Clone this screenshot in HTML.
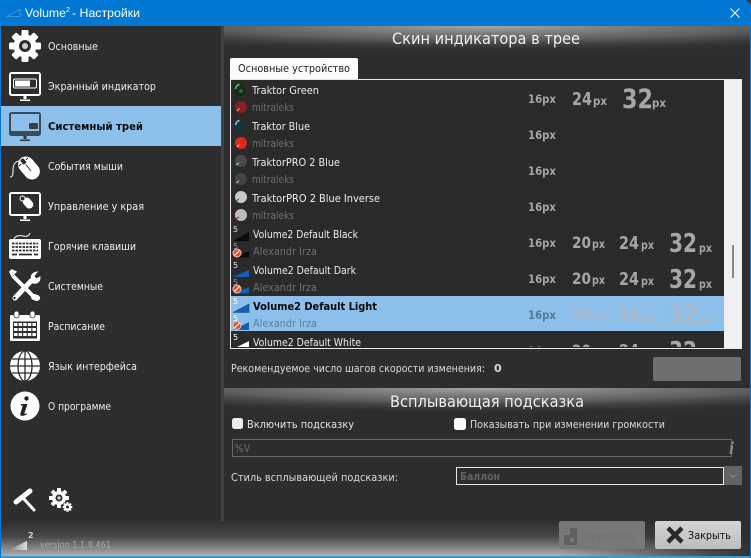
<!DOCTYPE html>
<html lang="ru"><head><meta charset="utf-8"><title>Volume2 - Настройки</title>
<style>
html,body{margin:0;padding:0;background:#2d2d2d;width:751px;height:558px;overflow:hidden}
svg{display:block;position:absolute;left:0;top:0;filter:blur(.3px)}
text{font-family:"DejaVu Sans",sans-serif;font-size:11px;fill:#e4e4e4}
.t{font-family:"Liberation Sans",sans-serif;font-size:12px;fill:#fff}
.m{font-size:11px;fill:#ececec}
.n{font-size:11px;fill:#ececec}
.g{font-size:11px;fill:#6f6f6f}
.s{font-family:"DejaVu Sans",sans-serif;font-weight:bold;fill:#a6a6a6}
.h{font-size:16px;fill:#f0f0f0}
.e{fill:#d4d4d4;filter:drop-shadow(.6px 0 0 rgba(255,255,255,.18))}
.f{fill:#a9b9c7}
.v{font-size:8px;fill:#e0e0e0}
</style></head><body>
<svg width="751" height="558" viewBox="0 0 751 558" xmlns="http://www.w3.org/2000/svg">
<defs>
<radialGradient id="g1" cx="0.5" cy="0" r="1"><stop offset="0" stop-color="#a8a8a8"/><stop offset=".5" stop-color="#7a7a7a" stop-opacity=".65"/><stop offset="1" stop-color="#2d2d2d" stop-opacity="0"/></radialGradient>
<linearGradient id="g2" x1="0" y1="0" x2="0" y2="1"><stop offset="0" stop-color="#aaa" stop-opacity="0"/><stop offset=".45" stop-color="#aaa" stop-opacity=".2"/><stop offset="1" stop-color="#b0b0b0"/></linearGradient>
<linearGradient id="g3" x1="0" y1="0" x2="1" y2="0"><stop offset="0" stop-color="#2d2d2d" stop-opacity="0"/><stop offset="1" stop-color="#2d2d2d" stop-opacity=".95"/></linearGradient>
<linearGradient id="btn" x1="0" y1="0" x2="0" y2="1"><stop offset="0" stop-color="#d4d4d4"/><stop offset="1" stop-color="#bdbdbd"/></linearGradient>
<linearGradient id="tri" x1="0" y1="0" x2="1" y2="0"><stop offset="0" stop-color="#888"/><stop offset="1" stop-color="#ddd"/></linearGradient>
<clipPath id="lc"><rect x="231" y="80" width="493" height="267"/></clipPath>
<g id="ban"><circle cx="0" cy="0" r="4" fill="#d9502f" stroke="#f2c4b4" stroke-width="1"/><path d="M-2.500 2.500L2.500-2.500" stroke="#fff" stroke-width="1.200"/></g>
</defs>

<!-- window -->
<rect width="751" height="558" fill="#0078d4"/>
<rect x="1" y="26" width="749" height="530" fill="#2d2d2d"/>
<path d="M746 0h5v5z" fill="#3a3a3a"/>

<!-- title -->
<path d="M7 16.500L20 9.500V16.500Z" fill="#0a6cbc" stroke="#4da3e6" stroke-width=".8"/>
<text class="t" x="25" y="17" textLength="41" lengthAdjust="spacingAndGlyphs">Volume</text>
<text class="t" x="66" y="12" style="font-size:7px">2</text>
<text class="t" x="72" y="17" textLength="68" lengthAdjust="spacingAndGlyphs">- Настройки</text>
<path d="M730.500 8.500L739.500 17.500M739.500 8.500L730.500 17.500" stroke="#fff" stroke-width="1" fill="none"/>

<!-- backgrounds -->
<rect x="221" y="26" width="3" height="495" fill="#414141"/>
<rect x="224" y="26" width="526" height="27" fill="url(#g1)"/>
<rect x="224" y="388" width="526" height="26" fill="url(#g1)"/>
<rect x="1" y="520" width="749" height="36" fill="url(#g2)"/>
<rect x="560" y="520" width="190" height="36" fill="url(#g3)"/>
<rect x="1" y="556" width="749" height="2" fill="#2f9bd8"/>

<!-- selected side -->
<rect x="1" y="106" width="220" height="40" fill="#8cbfe9"/>

<!-- icon: gear -->
<g fill="#fff">
<g transform="translate(25 46)">
<circle r="11.500"/>
<rect x="-3.500" y="-16" width="7" height="32" rx="1.500"/>
<rect x="-3.500" y="-16" width="7" height="32" rx="1.500" transform="rotate(45)"/>
<rect x="-3.500" y="-16" width="7" height="32" rx="1.500" transform="rotate(90)"/>
<rect x="-3.500" y="-16" width="7" height="32" rx="1.500" transform="rotate(135)"/>
<circle r="6" fill="#2d2d2d"/><circle r="3" fill="#d0d0d0"/>
</g>
</g>
<!-- icon: osd monitor -->
<g>
<rect x="10" y="73" width="30" height="22" rx="1.500" fill="none" stroke="#fff" stroke-width="2"/>
<rect x="13.500" y="79" width="23" height="9" rx="1.500" fill="#2d2d2d" stroke="#fff" stroke-width="1"/>
<rect x="15" y="80.500" width="15" height="6" fill="#fff"/>
<path d="M23.500 96h3v3h-3zM20 99.500h10v1.500h-10z" fill="#fff"/>
</g>
<!-- icon: tray monitor -->
<g>
<rect x="10" y="113" width="30" height="22" rx="1.500" fill="#8cbfe9" stroke="#3c4a58" stroke-width="2"/>
<rect x="10" y="131" width="30" height="4" fill="#3c4a58"/>
<rect x="29" y="123" width="9" height="6" rx="1" fill="#3a3f46"/>
<path d="M23.500 136h3v3h-3zM20 139.500h10v1.500h-10z" fill="#2c3640"/>
</g>
<!-- icon: mouse -->
<g>
<rect x="-8" y="-12.500" width="16" height="25" rx="8" transform="translate(29 168) rotate(-40)" fill="#fff"/>
<path d="M19 166L28 158M23 161l8 10" stroke="#2d2d2d" stroke-width="1" fill="none"/>
<path d="M10 177c3 0 3-3 3-7c0-5 2-9 7-9" fill="none" stroke="#fff" stroke-width="1"/>
<rect x="20.500" y="158" width="5" height="7" rx="2" fill="#2d2d2d" stroke="#fff" stroke-width="1" transform="rotate(-40 23 161)"/>
</g>
<!-- icon: edge -->
<g>
<rect x="10" y="193" width="30" height="22" rx="1.500" fill="none" stroke="#fff" stroke-width="2"/>
<rect x="-4" y="-6" width="8" height="12" rx="4" transform="translate(28 203) rotate(-40)" fill="#fff"/>
<circle cx="22.500" cy="198.500" r="2.500" fill="#2d2d2d" stroke="#fff" stroke-width="1"/>
<path d="M23.500 216h3v3h-3zM20 219.500h10v1.500h-10z" fill="#fff"/>
</g>
<!-- icon: keyboard -->
<g>
<rect x="9" y="239" width="32" height="20" rx="2" fill="#fff"/>
<path d="M14 239c1-3 5-4 9-3c4 1 6 0 7-3" fill="none" stroke="#fff" stroke-width="1"/>
<path d="M12 243.500h26M12 247h26M12 250.500h26" stroke="#2d2d2d" stroke-width="1.800" stroke-dasharray="2.500 1" fill="none"/>
<path d="M12 254.500h5M19 254.500h13M34 254.500h4" stroke="#2d2d2d" stroke-width="1.800" fill="none"/>
</g>
<!-- icon: tools -->
<g fill="none" stroke="#fff">
<path d="M13 276L33 296" stroke-width="4"/>
<path d="M12 275l3-3-3-1.500-1.500 1.500z" stroke-width="2.500"/>
<path d="M34 297l3 1" stroke-width="6" stroke-linecap="round"/>
<path d="M15 298L31 281" stroke-width="5" stroke-linecap="round"/>
<circle cx="14.500" cy="298" r="1.200" fill="#2d2d2d" stroke="none"/>
<path d="M32 280c-2-4 0-7 5-8l-3 4 2 3 4-2c0 5-3 7-7 6z" fill="#fff" stroke-width="1"/>
</g>
<!-- icon: calendar -->
<g>
<rect x="10" y="315" width="30" height="26" rx="1.500" fill="#fff"/>
<rect x="14" y="311" width="5" height="7" rx="2.500" fill="#fff" stroke="#2d2d2d" stroke-width=".8"/>
<rect x="30" y="311" width="5" height="7" rx="2.500" fill="#fff" stroke="#2d2d2d" stroke-width=".8"/>
<rect x="13" y="321.500" width="24" height="17" fill="#2d2d2d"/>
<path d="M14 324.500h22M14 329.500h22M14 334.500h22" stroke="#fff" stroke-width="3" stroke-dasharray="3.500 1.100" fill="none"/>
</g>
<!-- icon: globe -->
<g>
<circle cx="25" cy="366" r="15" fill="#fff"/>
<g fill="none" stroke="#2d2d2d" stroke-width="1.300">
<path d="M25 351v30M10 366h30M12 359h26M12 373h26"/>
<ellipse cx="25" cy="366" rx="7" ry="15"/>
</g>
</g>
<!-- icon: info -->
<g>
<circle cx="25" cy="406" r="14.500" fill="#fff"/>
<circle cx="26.500" cy="398.500" r="2.200" fill="#222"/>
<path d="M21 404h6.500l-3 9c-.3 1 .5 1.300 2.500 0l-.2 1.200c-3 2-7 2.500-6.500-.5l2.500-8.200h-2z" fill="#222"/>
</g>
<!-- small: roller -->
<g>
<path d="M16 502L30 491" stroke="#fff" stroke-width="5" stroke-linecap="round" fill="none"/>
<path d="M24 499L34 510" stroke="#fff" stroke-width="3" stroke-linecap="round" fill="none"/>
</g>
<!-- small: gears -->
<g fill="#fff">
<g transform="translate(59 498)">
<circle r="7"/>
<rect x="-2" y="-10" width="4" height="20" rx=".8"/>
<rect x="-2" y="-10" width="4" height="20" rx=".8" transform="rotate(45)"/>
<rect x="-2" y="-10" width="4" height="20" rx=".8" transform="rotate(90)"/>
<rect x="-2" y="-10" width="4" height="20" rx=".8" transform="rotate(135)"/>
<circle r="3.500" fill="#2d2d2d"/><circle r="1.700" fill="#ccc"/>
</g>
<g transform="translate(67.500 507)">
<circle r="5.500" fill="#2d2d2d"/>
<circle r="3.500"/>
<rect x="-1.100" y="-4.800" width="2.200" height="9.600"/>
<rect x="-1.100" y="-4.800" width="2.200" height="9.600" transform="rotate(45)"/>
<rect x="-1.100" y="-4.800" width="2.200" height="9.600" transform="rotate(90)"/>
<rect x="-1.100" y="-4.800" width="2.200" height="9.600" transform="rotate(135)"/>
<circle r="1.500" fill="#2d2d2d"/>
</g>
</g>

<!-- sidebar text -->
<text class="m" x="48" y="50" textLength="50" lengthAdjust="spacingAndGlyphs">Основные</text>
<text class="m" x="48" y="90" textLength="108" lengthAdjust="spacingAndGlyphs">Экранный индикатор</text>
<text class="m" x="48" y="130" textLength="95" lengthAdjust="spacingAndGlyphs" style="font-weight:bold;fill:#0b0b0b">Системный трей</text>
<text class="m" x="48" y="170" textLength="75" lengthAdjust="spacingAndGlyphs">События мыши</text>
<text class="m" x="48" y="210" textLength="96" lengthAdjust="spacingAndGlyphs">Управление у края</text>
<text class="m" x="48" y="250" textLength="88" lengthAdjust="spacingAndGlyphs">Горячие клавиши</text>
<text class="m" x="48" y="290" textLength="55" lengthAdjust="spacingAndGlyphs">Системные</text>
<text class="m" x="48" y="330" textLength="57" lengthAdjust="spacingAndGlyphs">Расписание</text>
<text class="m" x="48" y="370" textLength="89" lengthAdjust="spacingAndGlyphs">Язык интерфейса</text>
<text class="m" x="48" y="410" textLength="63" lengthAdjust="spacingAndGlyphs">О программе</text>

<!-- logo/version -->
<path d="M9 550L27 541V550Z" fill="url(#tri)"/>
<text x="28" y="538" style="font-weight:bold;font-size:8px;fill:#d5d5d5">2</text>
<text x="40" y="548" style="font-size:9.500px;fill:#a4a4a4" textLength="71" lengthAdjust="spacingAndGlyphs">version 1.1.8.461</text>

<!-- heading -->
<text class="h" x="392" y="44" textLength="188" lengthAdjust="spacingAndGlyphs">Скин индикатора в трее</text>

<!-- tab -->
<path d="M230 79V60q0-2 2-2h124q2 0 2 2v19z" fill="#fbfbfb"/>
<text x="238" y="72" style="fill:#222" textLength="112" lengthAdjust="spacingAndGlyphs">Основные устройство</text>

<!-- list -->
<rect x="230.500" y="79.500" width="511" height="269" fill="#2a2a2a" stroke="#e8e8e8" stroke-width="1"/>
<rect x="724" y="80" width="17" height="268" fill="#f0f0f0"/>
<rect x="732" y="245" width="2" height="33" fill="#8a8a8a"/>
<g clip-path="url(#lc)">
<rect x="231" y="296" width="493" height="35" fill="#8cbfe9"/>

<!-- knobs -->
<circle cx="240" cy="90" r="6" fill="#152a1a"/><path d="M235.500 89a5 5 0 0 1 4-4.500" fill="none" stroke="#5fd070" stroke-width="1.500"/><circle cx="241" cy="91" r="2" fill="#2a6a35"/>
<circle cx="241" cy="107" r="6" fill="#8a1d1d"/><path d="M237 111l2.500-2.500" stroke="#f0b0b0" stroke-width="1"/>
<circle cx="240" cy="126" r="6" fill="#173238"/><path d="M235.500 125a5 5 0 0 1 4-4.500" fill="none" stroke="#7fd5e0" stroke-width="1.500"/>
<circle cx="241" cy="143" r="6" fill="#d92a1a"/><path d="M237 147l2.500-2.500" stroke="#f5b0a0" stroke-width="1"/>
<circle cx="241" cy="161" r="6" fill="#4a4a4a"/><path d="M236 165l3-2" stroke="#6fe0b0" stroke-width="1.200"/>
<circle cx="241" cy="179" r="6" fill="#444"/><path d="M236 183l3-2" stroke="#e09090" stroke-width="1.200"/>
<circle cx="241" cy="197" r="6" fill="#c9c9c9"/><path d="M236 201l3-2" stroke="#1f7f50" stroke-width="1.200"/>
<circle cx="241" cy="215" r="6" fill="#bdbdbd"/><path d="M236 219l3-2" stroke="#b03030" stroke-width="1.200"/>

<!-- volume icons -->
<path d="M233 241L249 232V241Z" fill="#0b0b0b"/><text class="v" x="233" y="232">5</text>
<path d="M233 257.500L249 251V257.500Z" fill="#0b0b0b"/><text class="v" x="233" y="249" style="fill:#999">5</text>
<path d="M233 277L249 270V277Z" fill="#0e5fb5"/><text class="v" x="233" y="268">5</text>
<path d="M233 293.500L249 287V293.500Z" fill="#0e5fb5"/><text class="v" x="233" y="285" style="fill:#999">5</text>
<path d="M233 312.500L249 304V312.500Z" fill="#1560ad" stroke="#0d4c90" stroke-width=".6"/><text class="v" x="233" y="304" style="fill:#fff">5</text>
<path d="M233 330L249 322V330Z" fill="#1560ad"/><text class="v" x="233" y="321" style="fill:#fff">5</text>
<path d="M235 348L249 341V348Z" fill="#fff"/><text class="v" x="233" y="340" style="fill:#fff">5</text>
<use href="#ban" transform="translate(237 253)"/>
<use href="#ban" transform="translate(237 289)"/>
<use href="#ban" transform="translate(237 325.500)"/>

<!-- names -->
<text class="n" x="252" y="94" textLength="67" lengthAdjust="spacingAndGlyphs">Traktor Green</text>
<text class="g" x="252" y="111" textLength="42" lengthAdjust="spacingAndGlyphs">mitraleks</text>
<text class="n" x="252" y="130" textLength="58" lengthAdjust="spacingAndGlyphs">Traktor Blue</text>
<text class="g" x="252" y="147" textLength="42" lengthAdjust="spacingAndGlyphs">mitraleks</text>
<text class="n" x="252" y="166" textLength="88" lengthAdjust="spacingAndGlyphs">TraktorPRO 2 Blue</text>
<text class="g" x="252" y="183" textLength="42" lengthAdjust="spacingAndGlyphs">mitraleks</text>
<text class="n" x="252" y="202" textLength="128" lengthAdjust="spacingAndGlyphs">TraktorPRO 2 Blue Inverse</text>
<text class="g" x="252" y="219" textLength="42" lengthAdjust="spacingAndGlyphs">mitraleks</text>
<text class="n" x="253" y="238" textLength="105" lengthAdjust="spacingAndGlyphs">Volume2 Default Black</text>
<text class="g" x="253" y="255" textLength="64" lengthAdjust="spacingAndGlyphs">Alexandr Irza</text>
<text class="n" x="253" y="274" textLength="103" lengthAdjust="spacingAndGlyphs">Volume2 Default Dark</text>
<text class="g" x="253" y="291" textLength="64" lengthAdjust="spacingAndGlyphs">Alexandr Irza</text>
<text class="n" x="253" y="310" textLength="124" lengthAdjust="spacingAndGlyphs" style="font-weight:bold;fill:#080808">Volume2 Default Light</text>
<text class="g" x="253" y="327" textLength="64" lengthAdjust="spacingAndGlyphs" style="fill:#5f7f9c">Alexandr Irza</text>
<text class="n" x="253" y="346" textLength="108" lengthAdjust="spacingAndGlyphs">Volume2 Default White</text>

<!-- sizes -->
<text class="s" x="528" y="103" style="font-size:11.500px" textLength="28" lengthAdjust="spacingAndGlyphs">16px</text>
<text class="s" x="572" y="105" style="font-size:18px" textLength="20" lengthAdjust="spacingAndGlyphs">24</text><text class="s" x="593" y="105" style="font-size:11.500px" textLength="14" lengthAdjust="spacingAndGlyphs">px</text>
<text class="s" x="622" y="108" style="font-size:27px" textLength="31" lengthAdjust="spacingAndGlyphs">32</text><text class="s" x="652" y="107" style="font-size:11.500px" textLength="14" lengthAdjust="spacingAndGlyphs">px</text>
<text class="s" x="528" y="139" style="font-size:11.500px" textLength="28" lengthAdjust="spacingAndGlyphs">16px</text>
<text class="s" x="528" y="175" style="font-size:11.500px" textLength="28" lengthAdjust="spacingAndGlyphs">16px</text>
<text class="s" x="528" y="211" style="font-size:11.500px" textLength="28" lengthAdjust="spacingAndGlyphs">16px</text>

<text class="s" x="528" y="247" style="font-size:11.500px" textLength="28" lengthAdjust="spacingAndGlyphs">16px</text>
<text class="s" x="572" y="248" style="font-size:16px" textLength="19" lengthAdjust="spacingAndGlyphs">20</text><text class="s" x="592" y="248" style="font-size:11.500px" textLength="13" lengthAdjust="spacingAndGlyphs">px</text>
<text class="s" x="619" y="249" style="font-size:17.500px" textLength="20" lengthAdjust="spacingAndGlyphs">24</text><text class="s" x="641" y="249" style="font-size:11.500px" textLength="13" lengthAdjust="spacingAndGlyphs">px</text>
<text class="s" x="669" y="252" style="font-size:26px" textLength="28" lengthAdjust="spacingAndGlyphs">32</text><text class="s" x="699" y="252" style="font-size:11.500px" textLength="13" lengthAdjust="spacingAndGlyphs">px</text>

<text class="s" x="528" y="283" style="font-size:11.500px" textLength="28" lengthAdjust="spacingAndGlyphs">16px</text>
<text class="s" x="572" y="284" style="font-size:16px" textLength="19" lengthAdjust="spacingAndGlyphs">20</text><text class="s" x="592" y="284" style="font-size:11.500px" textLength="13" lengthAdjust="spacingAndGlyphs">px</text>
<text class="s" x="619" y="285" style="font-size:17.500px" textLength="20" lengthAdjust="spacingAndGlyphs">24</text><text class="s" x="641" y="285" style="font-size:11.500px" textLength="13" lengthAdjust="spacingAndGlyphs">px</text>
<text class="s" x="669" y="288" style="font-size:26px" textLength="28" lengthAdjust="spacingAndGlyphs">32</text><text class="s" x="699" y="288" style="font-size:11.500px" textLength="13" lengthAdjust="spacingAndGlyphs">px</text>

<text class="s" x="528" y="319" style="font-size:11.500px;fill:#557a9a" textLength="28" lengthAdjust="spacingAndGlyphs">16px</text>
<text class="s f" x="572" y="320" style="font-size:16px" textLength="19" lengthAdjust="spacingAndGlyphs">20</text><text class="s f" x="592" y="320" style="font-size:11.500px" textLength="13" lengthAdjust="spacingAndGlyphs">px</text>
<text class="s f" x="619" y="321" style="font-size:17.500px" textLength="20" lengthAdjust="spacingAndGlyphs">24</text><text class="s f" x="641" y="321" style="font-size:11.500px" textLength="13" lengthAdjust="spacingAndGlyphs">px</text>
<text class="s f" x="669" y="324" style="font-size:26px" textLength="28" lengthAdjust="spacingAndGlyphs">32</text><text class="s f" x="699" y="324" style="font-size:11.500px" textLength="13" lengthAdjust="spacingAndGlyphs">px</text>

<text class="s" x="528" y="355" style="font-size:11.500px" textLength="28" lengthAdjust="spacingAndGlyphs">16px</text>
<text class="s" x="572" y="356" style="font-size:16px" textLength="19" lengthAdjust="spacingAndGlyphs">20</text>
<text class="s" x="619" y="357" style="font-size:17.500px" textLength="20" lengthAdjust="spacingAndGlyphs">24</text>
<text class="s" x="669" y="360" style="font-size:26px" textLength="28" lengthAdjust="spacingAndGlyphs">32</text>
</g>

<!-- recommendation -->
<text class="e" x="231" y="372" textLength="254" lengthAdjust="spacingAndGlyphs">Рекомендуемое число шагов скорости изменения:</text>
<text class="e" x="494" y="372" style="font-weight:bold">0</text>
<rect x="653" y="357" width="88" height="24" rx="2" fill="#6e6e6e"/>

<!-- popup heading -->
<text class="h" x="390" y="407" textLength="194" lengthAdjust="spacingAndGlyphs">Всплывающая подсказка</text>

<!-- checkboxes -->
<rect x="232" y="418" width="11" height="11" rx="2.500" fill="#ececec"/>
<text x="247" y="428" textLength="107" lengthAdjust="spacingAndGlyphs">Включить подсказку</text>
<rect x="454" y="418" width="12" height="12" rx="2.500" fill="#fafafa"/>
<text class="e" x="470" y="428" textLength="195" lengthAdjust="spacingAndGlyphs">Показывать при изменении громкости</text>

<!-- input -->
<rect x="232.500" y="439.500" width="499" height="17" fill="#2d2d2d" stroke="#666" stroke-width="1"/>
<text x="235" y="452" style="fill:#6c6c6c" textLength="15" lengthAdjust="spacingAndGlyphs">%V</text>
<text x="729" y="454" style="font-family:'Liberation Serif',serif;font-style:italic;font-weight:bold;font-size:18px;fill:#8a8a8a">i</text>

<!-- combo -->
<text class="e" x="231" y="481" textLength="167" lengthAdjust="spacingAndGlyphs">Стиль всплывающей подсказки:</text>
<rect x="456.500" y="467.500" width="267" height="17" fill="#2d2d2d" stroke="#e8e8e8" stroke-width="1"/>
<text x="460" y="480" style="font-weight:bold;fill:#636363" textLength="40" lengthAdjust="spacingAndGlyphs">Баллон</text>
<rect x="724" y="466" width="18" height="19" fill="#636363"/>
<path d="M729 474l4 3.500 4-3.500" fill="none" stroke="#8a8a8a" stroke-width="1"/>

<!-- buttons -->
<rect x="559" y="521" width="86" height="28" rx="2" fill="#787878"/>
<path d="M564 541v-6h6v-7h7v17h-13z" fill="#5f5f5f"/>
<rect x="570" y="538" width="4" height="4" fill="#787878"/>
<text x="585" y="540" style="fill:#6e6e6e" textLength="50" lengthAdjust="spacingAndGlyphs">Применить</text>
<rect x="655" y="521" width="86" height="28" rx="2" fill="url(#btn)"/>
<path d="M668 528L682 542M682 528L668 542" stroke="#2a2a2a" stroke-width="4.500" fill="none"/>
<text x="688" y="539" style="fill:#111" textLength="43" lengthAdjust="spacingAndGlyphs">Закрыть</text>
</svg>
</body></html>
